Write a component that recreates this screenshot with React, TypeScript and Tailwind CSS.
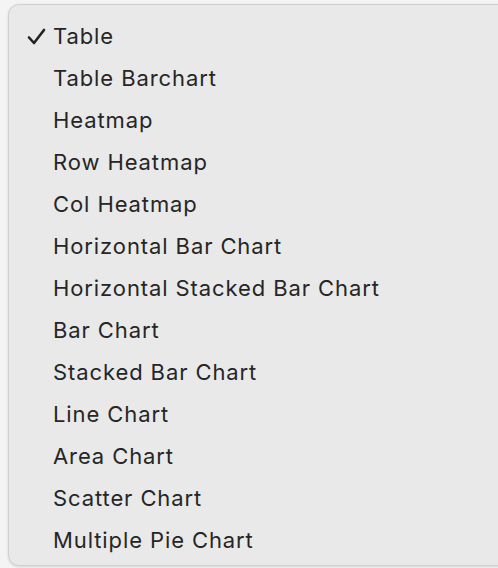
import React from 'react';

const items = [
  'Table',
  'Table Barchart',
  'Heatmap',
  'Row Heatmap',
  'Col Heatmap',
  'Horizontal Bar Chart',
  'Horizontal Stacked Bar Chart',
  'Bar Chart',
  'Stacked Bar Chart',
  'Line Chart',
  'Area Chart',
  'Scatter Chart',
  'Multiple Pie Chart',
];

const Check: React.FC = () => (
  <svg width="19" height="17" viewBox="0 0 19 17" className="absolute left-[-26px] top-[13px]">
    <path d="M2 9.5 L7 15 L17 2" fill="none" stroke="#222" strokeWidth="2.6" strokeLinecap="round" strokeLinejoin="round" />
  </svg>
);

export default function App() {
  return (
    <div className="w-[498px] h-[568px] overflow-hidden bg-[#f4f4f4] pl-[8px] pt-[4px]" style={{ fontFamily: 'Inter, "Liberation Sans", Arial, sans-serif' }}>
      <div className="w-[520px] h-[562px] rounded-l-[11px] bg-[#e9e9e9] border border-[#cfcfcf] shadow-[0_1px_3px_rgba(0,0,0,0.12)] pt-[10px] pl-[44px]">
        {items.map((label, i) => (
          <div key={label} className="relative h-[42px] flex items-center text-[22px] tracking-[0.9px] text-[#262626]">
            {i === 0 && <Check />}
            {label}
          </div>
        ))}
      </div>
    </div>
  );
}
